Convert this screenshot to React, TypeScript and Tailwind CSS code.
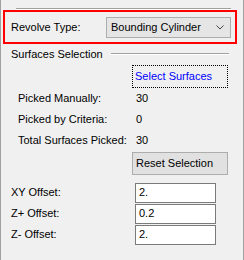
export default function App() {
  const picked = [
    { label: 'Picked Manually:', value: '30' },
    { label: 'Picked by Criteria:', value: '0' },
    { label: 'Total Surfaces Picked:', value: '30' },
  ]
  const offsets = [
    { label: 'XY Offset:', value: '2.' },
    { label: 'Z+ Offset:', value: '0.2' },
    { label: 'Z- Offset:', value: '2.' },
  ]

  return (
    <div className="w-[244px] h-[260px] overflow-hidden bg-[#f0f0f0] border-x border-[#a0a0a0] font-['Liberation_Sans',Arial,sans-serif] text-[11px] leading-none text-black flex flex-col">
      {/* bottom edge of the group above */}
      <div className="mt-[8px] ml-[15px] mr-[12px] border-t border-b border-t-[#a0a0a0] border-b-white" />

      {/* highlighted revolve type row */}
      <div className="ml-[2px] mr-[6px] h-[34px] border-2 border-[#ff0000] flex items-center">
        <span className="pl-[6px] w-[101px] shrink-0">Revolve Type:</span>
        <div className="w-[125px] h-[21px] border border-[#adadad] bg-[#e5e5e5] flex items-center pl-[4px] pr-[6px]">
          <span className="flex-1">Bounding Cylinder</span>
          <svg width="8" height="5" viewBox="0 0 8 5" fill="none" stroke="#444" strokeWidth="1">
            <path d="M0.5 0.5 L4 4 L7.5 0.5" />
          </svg>
        </div>
      </div>

      {/* surfaces selection group */}
      <div className="mt-[3px] h-[14px] flex items-center">
        <span className="pl-[10px]">Surfaces Selection</span>
        <div className="ml-auto mr-[14px] w-[118px] border-t border-b border-t-[#a0a0a0] border-b-white" />
      </div>

      <div className="mt-[4px] ml-[131px] w-[96px] h-[23px] border border-dotted border-black bg-[#f0f0f0] flex items-center pl-[2px] text-[#0000ff]">
        Select Surfaces
      </div>

      <div className="flex flex-col">
        {picked.map((p) => (
          <div key={p.label} className="h-[21px] flex items-center">
            <span className="pl-[17px] w-[135px] shrink-0">{p.label}</span>
            <span>{p.value}</span>
          </div>
        ))}
      </div>

      <div className="mt-[1px] ml-[131px] w-[96px] h-[23px] border border-[#adadad] bg-[#e1e1e1] flex items-center pl-[3px]">
        Reset Selection
      </div>

      <div className="mt-[7px] flex flex-col">
        {offsets.map((o) => (
          <div key={o.label} className="h-[21px] flex items-center">
            <span className="pl-[10px] w-[134px] shrink-0">{o.label}</span>
            <div className="w-[81px] h-[20px] border border-[#7a7a7a] bg-white flex items-center pl-[3px]">
              {o.value}
            </div>
          </div>
        ))}
      </div>
    </div>
  )
}
